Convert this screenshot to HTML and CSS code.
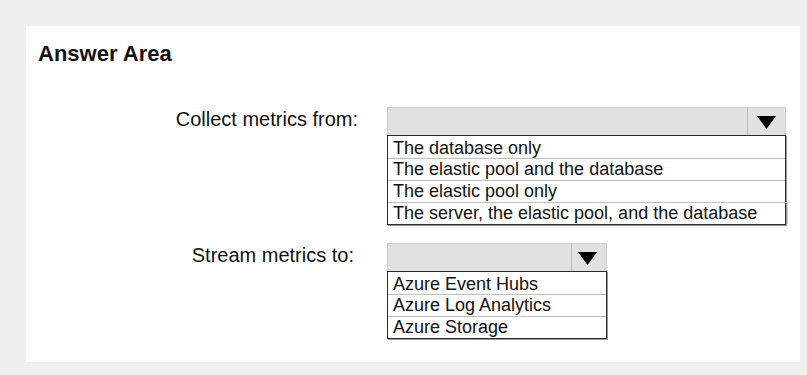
FILE: index.html
```html
<!DOCTYPE html>
<html lang="en">
<head>
    <meta charset="UTF-8">
    <meta name="viewport" content="width=device-width, initial-scale=1.0">
    <title>Answer Area</title>
    <link rel="stylesheet" href="styles.css">
</head>
<body>
    <section class="panel">
        <h2 class="panel_title">Answer Area</h2>

        <div class="question">
            <span class="question_label">Collect metrics from:</span>
            <div class="select select_wide">
                <div class="select_head">
                    <span class="select_value"></span>
                    <span class="select_arrow">
                        <svg width="19" height="13" viewBox="0 0 19 13"><polygon points="0,0 19,0 9.5,13" fill="#000"/></svg>
                    </span>
                </div>
                <ul class="select_list">
                    <li class="select_option">The database only</li>
                    <li class="select_option">The elastic pool and the database</li>
                    <li class="select_option">The elastic pool only</li>
                    <li class="select_option select_option_over">The server, the elastic pool, and the database</li>
                </ul>
            </div>
        </div>

        <div class="question">
            <span class="question_label question_label_short">Stream metrics to:</span>
            <div class="select select_narrow">
                <div class="select_head">
                    <span class="select_value"></span>
                    <span class="select_arrow">
                        <svg width="19" height="13" viewBox="0 0 19 13"><polygon points="0,0 19,0 9.5,13" fill="#000"/></svg>
                    </span>
                </div>
                <ul class="select_list">
                    <li class="select_option">Azure Event Hubs</li>
                    <li class="select_option">Azure Log Analytics</li>
                    <li class="select_option">Azure Storage</li>
                </ul>
            </div>
        </div>
    </section>
</body>
</html>
```

FILE: styles.css
```css
* {
    margin: 0;
    padding: 0;
    box-sizing: border-box;
    font-family: "Liberation Sans", Arial, sans-serif;
}
body {
    background: #efefef;
    padding: 26px;
    color: #111;
}
.panel {
    width: 774px;
    height: 336px;
    background: #fff;
    padding: 15px 12px 0;
}
.panel_title {
    font-size: 22px;
    font-weight: bold;
    line-height: 25px;
    margin-bottom: 41px;
}
.question {
    display: flex;
    align-items: flex-start;
    gap: 29px;
    margin-bottom: 18px;
}
.question_label {
    width: 320px;
    text-align: right;
    font-size: 20px;
    line-height: 25px;
}
.question_label_short {
    padding-right: 4px;
}
.select_wide {
    width: 399px;
}
.select_narrow {
    width: 220px;
}
.select_head {
    display: flex;
    height: 28px;
    background: #e1e1e1;
    border: 1px solid #cdcdcd;
    border-bottom: none;
}
.select_value {
    flex: 1;
}
.select_arrow {
    display: flex;
    align-items: center;
    justify-content: center;
    width: 38px;
    border-left: 1px solid #bcbcbc;
    padding-top: 2px;
}
.select_narrow .select_arrow {
    width: 35px;
    padding-right: 4px;
}
.select_list {
    list-style: none;
    border: 1px solid #2a2a2a;
    box-shadow: 1px 1px 0 #9a9a9a;
}
.select_option {
    height: 22px;
    padding: 2px 0 0 5px;
    font-size: 18px;
    line-height: 20px;
    white-space: nowrap;
}
.select_option + .select_option {
    border-top: 1px solid #bdbdbd;
    padding-top: 0;
}
.select_option_over {
    margin-right: -3px;
    border-right: 1px solid #cfcfcf;
}
```
